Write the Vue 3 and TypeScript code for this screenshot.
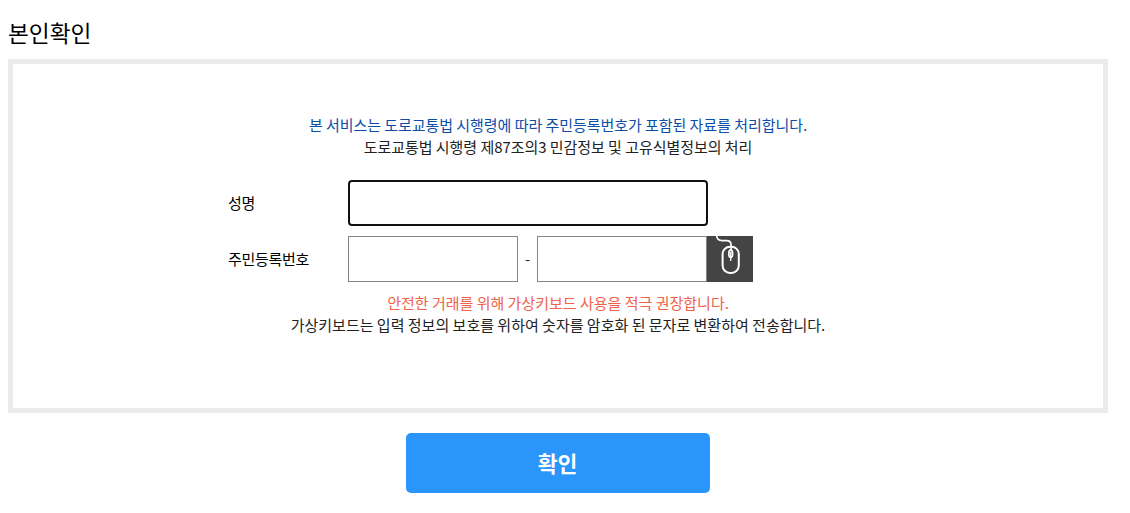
<script setup lang="ts">
import { onMounted, ref } from 'vue'

const name = ref<string>('')
const residentFront = ref<string>('')
const residentBack = ref<string>('')
const nameInput = ref<HTMLInputElement | null>(null)

onMounted(() => nameInput.value?.focus())
</script>

<template>
  <main class="page">
    <h1 class="title">본인확인</h1>
    <form class="verify" @submit.prevent>
      <section class="panel">
        <p class="notice notice-law">본 서비스는 도로교통법 시행령에 따라 주민등록번호가 포함된 자료를 처리합니다.</p>
        <p class="notice notice-article">도로교통법 시행령 제87조의3 민감정보 및 고유식별정보의 처리</p>
        <div class="fields">
          <div class="row">
            <label class="label" for="name">성명</label>
            <input id="name" ref="nameInput" v-model="name" class="input input-name" type="text" />
          </div>
          <div class="row">
            <label class="label" for="front">주민등록번호</label>
            <input id="front" v-model="residentFront" class="input" type="text" maxlength="6" />
            <span class="dash">-</span>
            <input v-model="residentBack" class="input input-back" type="password" maxlength="7" />
            <button class="keypad" type="button" aria-label="가상키보드">
              <svg width="46" height="46" viewBox="0 0 46 46" fill="none" stroke="#fff">
                <path d="M9.7 0C10 3 11.8 4.600 15 4.600h4.500c3 0 4.600 1.600 4.600 4.400V14" stroke-width="1.700" />
                <rect x="15.600" y="10.700" width="16.200" height="26.200" rx="7.400" stroke-width="2" />
                <ellipse cx="23.700" cy="17.800" rx="1.900" ry="3.600" stroke-width="1.700" />
                <path d="M23.700 16v9" stroke-width="1.300" />
              </svg>
            </button>
          </div>
        </div>
        <p class="notice notice-warn">안전한 거래를 위해 가상키보드 사용을 적극 권장합니다.</p>
        <p class="notice">가상키보드는 입력 정보의 보호를 위하여 숫자를 암호화 된 문자로 변환하여 전송합니다.</p>
      </section>
      <button class="submit" type="submit">확인</button>
    </form>
  </main>
</template>

<style>
body {
  margin: 0;
  background: #fff;
}
</style>

<style scoped>
.page {
  box-sizing: border-box;
  width: 1116px;
  padding: 13px 8px 0;
  font-family: "Noto Sans CJK KR", "Noto Sans", sans-serif;
  font-size: 15px;
  line-height: 22px;
  color: #222;
}

.title {
  margin: 0 0 6px;
  font-size: 22.7px;
  font-weight: 400;
  line-height: 40px;
  color: #000;
}

.verify {
  display: flex;
  flex-direction: column;
  align-items: center;
}

.panel {
  box-sizing: border-box;
  width: 100%;
  height: 354px;
  padding-top: 50px;
  border: 5px solid #ebebeb;
}

.notice {
  margin: 0;
  text-align: center;
}

.notice-law {
  color: #0d4da8;
  letter-spacing: -0.05px;
}

.notice-article {
  letter-spacing: -0.05px;
}

.notice-warn {
  color: #f0624a;
}

.fields {
  display: flex;
  flex-direction: column;
  gap: 10px;
  margin: 22px 0 10px 215px;
}

.row {
  display: flex;
  align-items: center;
  height: 46px;
}

.label {
  width: 120px;
  color: #000;
  letter-spacing: -0.3px;
}

.input {
  box-sizing: border-box;
  width: 170px;
  height: 46px;
  margin: 0;
  padding: 0 10px;
  border: 1px solid #858585;
  border-radius: 0;
  outline: none;
  background: #fff;
  font: inherit;
  caret-color: transparent;
}

.input-name {
  width: 360px;
  border: 2px solid #101010;
  border-radius: 4px;
}

.dash {
  width: 19px;
  text-align: center;
}

.keypad {
  width: 46px;
  height: 46px;
  padding: 0;
  border: 0;
  background: #444;
}

.keypad svg {
  display: block;
}

.submit {
  width: 304px;
  height: 60px;
  margin-top: 20px;
  padding: 0 1px 2px 0;
  border: 0;
  border-radius: 5px;
  background: #2a95fa;
  color: #fff;
  font-family: inherit;
  font-size: 21.6px;
  font-weight: 700;
}
</style>
